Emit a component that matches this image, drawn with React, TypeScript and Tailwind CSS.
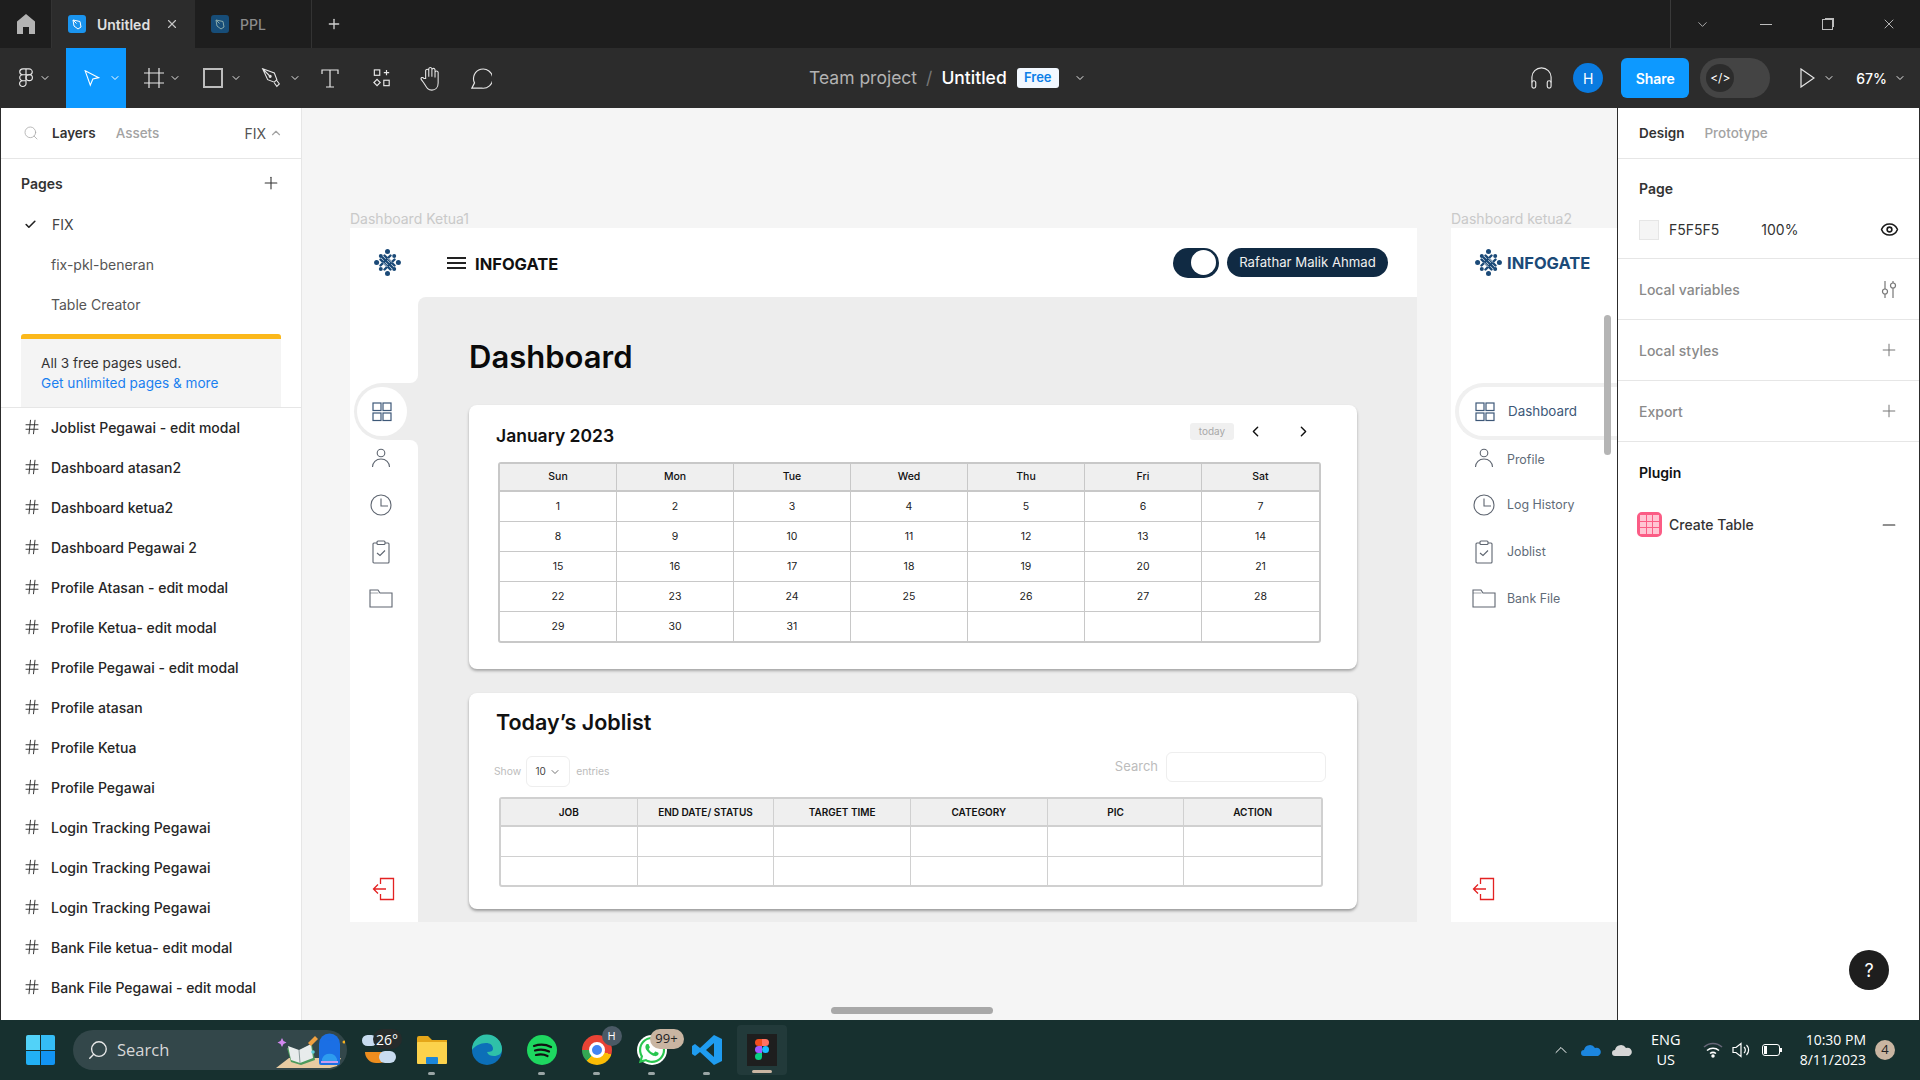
import React from 'react';
import { FaWhatsapp } from 'react-icons/fa';
import { ChevronDown, ChevronUp, ChevronLeft, ChevronRight, Plus, Minus, Search, Check, Eye, Hash, X } from 'lucide-react';

const pages = ['fix-pkl-beneran', 'Table Creator'];
const layers = [
  'Joblist Pegawai - edit modal',
  'Dashboard atasan2',
  'Dashboard ketua2',
  'Dashboard Pegawai 2',
  'Profile Atasan - edit modal',
  'Profile Ketua- edit modal',
  'Profile Pegawai - edit modal',
  'Profile atasan',
  'Profile Ketua',
  'Profile Pegawai',
  'Login Tracking Pegawai',
  'Login Tracking Pegawai',
  'Login Tracking Pegawai',
  'Bank File ketua- edit modal',
  'Bank File Pegawai - edit modal',
];
const days = ['Sun', 'Mon', 'Tue', 'Wed', 'Thu', 'Fri', 'Sat'];
const dates = [
  ['1', '2', '3', '4', '5', '6', '7'],
  ['8', '9', '10', '11', '12', '13', '14'],
  ['15', '16', '17', '18', '19', '20', '21'],
  ['22', '23', '24', '25', '26', '27', '28'],
  ['29', '30', '31', '', '', '', ''],
];
const columns = ['JOB', 'END DATE/ STATUS', 'TARGET TIME', 'CATEGORY', 'PIC', 'ACTION'];

const Chev = ({ className = 'text-[#e6e6e6]' }: { className?: string }) => (
  <ChevronDown size={12} strokeWidth={2} className={className} />
);

const Logo = () => (
  <svg width="27" height="27" viewBox="0 0 27 27" className="shrink-0">
    <g stroke="#1b4a78" strokeWidth="2.400" strokeLinecap="round">
      <path d="M6.500 10.500l10 10M10.500 6.500l10 10M8.500 8.500l10 10" />
      <path d="M6.500 16.500l10-10M10.500 20.500l10-10" />
    </g>
    <path d="M9 13.500l4.500 4.500M13.500 9l4.500 4.500" stroke="#fff" strokeWidth="0.800" />
    <g fill="#1b4a78">
      <circle cx="13.500" cy="2.600" r="2.500" />
      <circle cx="13.500" cy="24.400" r="2.500" />
      <circle cx="2.600" cy="13.500" r="2.500" />
      <circle cx="24.400" cy="13.500" r="2.500" />
      <circle cx="6.800" cy="7" r="2" />
      <circle cx="20.200" cy="7" r="2" />
      <circle cx="6.800" cy="20" r="2" />
      <circle cx="20.200" cy="20" r="2" />
    </g>
  </svg>
);

const GridIcon = () => (
  <svg width="20" height="20" viewBox="0 0 20 20" fill="none" stroke="#3d5878" strokeWidth="1.200">
    <rect x="1" y="1" width="8" height="7.500" />
    <rect x="11" y="1" width="8" height="7.500" />
    <rect x="1" y="11" width="8" height="7.500" />
    <rect x="11" y="11" width="8" height="7.500" />
  </svg>
);
const PersonIcon = () => (
  <svg width="20" height="20" viewBox="0 0 20 20" fill="none" stroke="#5e6570" strokeWidth="1.100">
    <circle cx="10" cy="5" r="3.800" />
    <path d="M1.500 19c0-4.500 3.500-8 8.500-8s8.500 3.500 8.500 8" />
  </svg>
);
const ClockIcon = () => (
  <svg width="22" height="22" viewBox="0 0 22 22" fill="none" stroke="#5e6570" strokeWidth="1.100">
    <circle cx="11" cy="11" r="10" />
    <path d="M11 4.500v7.500h7" />
  </svg>
);
const ClipIcon = () => (
  <svg width="18" height="24" viewBox="0 0 18 24" fill="none" stroke="#5e6570" strokeWidth="1.100">
    <rect x="1" y="3" width="16" height="20" rx="1" />
    <rect x="5" y="1" width="8" height="3.500" rx="1" fill="#fff" />
    <path d="M5 13l3 2.500 5-5" />
  </svg>
);
const FolderIcon = () => (
  <svg width="24" height="19" viewBox="0 0 24 19" fill="none" stroke="#5e6570" strokeWidth="1.100">
    <path d="M1 18V1h8l2 3h12v14z" />
    <path d="M9.500 4H1" strokeWidth="0.600" />
  </svg>
);
const LogoutIcon = () => (
  <svg width="24" height="24" viewBox="0 0 24 24" fill="none" stroke="#e32222" strokeWidth="1.300">
    <path d="M8.500 7V1.500h13v21h-13V17" />
    <path d="M14 12H1.500M6 7.500L1.500 12 6 16.500" />
  </svg>
);

function Tool({ className, active, chevron, children }: { className: string; active?: boolean; chevron?: boolean; children: React.ReactNode }) {
  return (
    <div className={`flex h-full items-center justify-center ${className} ${active ? 'bg-[#0d99ff]' : ''}`}>
      {children}
      {chevron && <Chev className={active ? 'text-white' : 'text-[#e6e6e6]'} />}
    </div>
  );
}

function FileBadge({ dim }: { dim?: boolean }) {
  return (
    <div className={`flex h-[18px] w-[18px] items-center justify-center rounded-[3px] ${dim ? 'bg-[#174d78]' : 'bg-[#1a94ee]'}`}>
      <svg width="12" height="12" viewBox="0 0 12 12" fill="none" stroke={dim ? '#8aa' : '#fff'} strokeWidth="1">
        <path d="M2 2l7 1.500L10 9l-3 2-4-3zM2 2l3.500 3.500" />
      </svg>
    </div>
  );
}

function TabBar() {
  return (
    <div className="flex h-12 items-stretch bg-[#1e1e1e] text-[14px] font-semibold">
      <div className="flex w-[52px] items-center justify-center border-r border-[#333]">
        <svg width="18" height="20" viewBox="0 0 18 20" fill="#b3b3b3">
          <path d="M9 0L0 7.500V20h6v-7h6v7h6V7.500z" />
        </svg>
      </div>
      <div className="flex w-[143px] items-center bg-[#2c2c2c] pl-[16px] text-[#e0e0e0]">
        <FileBadge />
        <span className="ml-[11px]">Untitled</span>
        <X size={14} strokeWidth={2} className="ml-[15px] text-[#c4c4c4]" />
      </div>
      <div className="flex w-[117px] items-center border-r border-[#333] pl-[16px] font-medium text-[#8c8c8c]">
        <FileBadge dim />
        <span className="ml-[11px]">PPL</span>
      </div>
      <div className="flex w-[44px] items-center justify-center text-[#d0d0d0]">
        <Plus size={16} strokeWidth={2} />
      </div>
      <div className="ml-auto flex w-[250px] items-center border-l border-[#3a3a3a] text-[#bdbdbd]">
        <div className="flex w-[64px] justify-center">
          <ChevronDown size={15} strokeWidth={1.400} />
        </div>
        <div className="flex w-[62px] justify-center">
          <div className="h-px w-[12px] bg-[#bdbdbd]" />
        </div>
        <div className="flex w-[62px] justify-center">
          <div className="h-[11px] w-[11px] border border-[#bdbdbd] shadow-[2px_-2px_0_-1px_#bdbdbd]" />
        </div>
        <div className="flex w-[62px] justify-center">
          <X size={16} strokeWidth={1.400} />
        </div>
      </div>
    </div>
  );
}

function ToolBar() {
  return (
    <div className="flex h-[60px] items-center bg-[#2c2c2c] text-white">
      <div className="flex h-full items-center">
        <Tool className="w-[66px] gap-[6px] pl-[4px]" chevron>
          <svg width="14" height="20" viewBox="0 0 14 22" fill="none" stroke="#e6e6e6" strokeWidth="1.200" preserveAspectRatio="none">
            <path d="M7 1H4a3.200 3.200 0 000 6.500h3zM7 1h3a3.200 3.200 0 010 6.500H7zM7 7.500H4a3.200 3.200 0 000 6.500h3zM7 14H4a3.200 3.200 0 103 3.200z" />
            <circle cx="10.200" cy="10.700" r="3.200" />
          </svg>
        </Tool>
        <Tool className="w-[60px] gap-[9px] pl-[13px]" active chevron>
          <svg width="16" height="17" viewBox="0 0 18 20" fill="none" stroke="#fff" strokeWidth="1.300">
            <path d="M1 1l16 8-7 1.500L7 18z" />
          </svg>
        </Tool>
        <Tool className="w-[66px] gap-[5px] pl-[7px]" chevron>
          <svg width="20" height="20" viewBox="0 0 20 20" fill="none" stroke="#e6e6e6" strokeWidth="1.200">
            <path d="M5 0v20M15 0v20M0 5h20M0 15h20" />
          </svg>
        </Tool>
        <Tool className="w-[60px] gap-[7px]" chevron>
          <div className="h-[20px] w-[20px] border-2 border-[#bdbdbd]" />
        </Tool>
        <Tool className="w-[58px] gap-[8px]" chevron>
          <svg width="20" height="20" viewBox="0 0 22 24" fill="none" stroke="#e6e6e6" strokeWidth="1.300">
            <path d="M1 1l14 5 3 8-3 3-8-3zM1 1l8 8M15 18l3 4 3-3-3-4" />
            <circle cx="10" cy="10" r="1.200" fill="#e6e6e6" />
          </svg>
        </Tool>
        <Tool className="w-[40px]">
          <svg width="18" height="19" viewBox="0 0 18 19" fill="none" stroke="#e6e6e6" strokeWidth="1.200">
            <path d="M1 5V1h16v4M9 1v17M5 18h8" />
          </svg>
        </Tool>
        <Tool className="w-[64px]">
          <svg width="18" height="18" viewBox="0 0 20 20" fill="none" stroke="#e6e6e6" strokeWidth="1.300">
            <rect x="1.500" y="1" width="6" height="6" />
            <rect x="12" y="12.500" width="6" height="6" />
            <path d="M15 1v6M12 4h6M4.500 11.500l3.500 3.500-3.500 3.500L1 15z" />
          </svg>
        </Tool>
        <Tool className="w-[34px]">
          <svg width="22" height="25" viewBox="0 0 24 28" fill="none" stroke="#e6e6e6" strokeWidth="1.200">
            <path d="M6 14V5a1.800 1.800 0 013.500 0v7V3a1.800 1.800 0 013.500 0v9V4a1.800 1.800 0 013.500 0v9V7a1.800 1.800 0 013.500 0v12c0 5-3 8-7 8-5 0-6-3-9-8l-3-4c-1-2 2-3 3-1z" />
          </svg>
        </Tool>
        <Tool className="w-[66px]">
          <svg width="21" height="21" viewBox="0 0 24 24" fill="none" stroke="#e6e6e6" strokeWidth="1.300">
            <path d="M1 23l3-6A11 11 0 1112 23z" />
          </svg>
        </Tool>
      </div>

      <div className="ml-[295px] flex items-center text-[17.500px]">
        <span className="text-[#b3b3b3]">Team project</span>
        <span className="mx-[9px] text-[#777]">/</span>
        <span className="font-medium text-white">Untitled</span>
        <span className="ml-[10px] flex h-[20px] w-[42px] items-center justify-center rounded-[3px] bg-[#f2f8ff] text-[13px] font-semibold text-[#0d7fe8]">Free</span>
        <Chev className="ml-[15px] text-[#e6e6e6]" />
      </div>

      <div className="ml-auto flex items-center">
        <svg width="23" height="22" viewBox="0 0 24 24" fill="none" stroke="#e6e6e6" strokeWidth="1.200" className="mr-[20px]" preserveAspectRatio="none">
          <path d="M2 17V11a10 10 0 0120 0v6" />
          <rect x="2" y="15" width="4" height="8" rx="2" />
          <rect x="18" y="15" width="4" height="8" rx="2" />
        </svg>
        <div className="flex h-[30px] w-[30px] items-center justify-center rounded-full bg-[#0a7be0] text-[14px]">H</div>
        <div className="ml-[18px] flex h-[40px] w-[68px] items-center justify-center rounded-[6px] bg-[#0d99ff] text-[14px] font-semibold">Share</div>
        <div className="ml-[11px] flex h-[40px] w-[70px] items-center rounded-full bg-[#444] pl-[6px]">
          <div className="flex h-[28px] w-[28px] items-center justify-center rounded-full bg-[#2c2c2c] text-[12px]">&lt;/&gt;</div>
        </div>
        <svg width="16" height="20" viewBox="0 0 16 20" fill="none" stroke="#e6e6e6" strokeWidth="1.200" className="ml-[29px]">
          <path d="M2 1l13 9-13 9z" />
        </svg>
        <Chev className="ml-[8px] text-[#e6e6e6]" />
        <span className="ml-[21px] text-[14px] font-medium">67%</span>
        <Chev className="ml-[7px] mr-[14px] text-[#e6e6e6]" />
      </div>
    </div>
  );
}

function LeftPanel() {
  return (
    <aside className="flex w-[302px] shrink-0 flex-col overflow-hidden border-x border-l-[#2c2c2c] border-r-[#e6e6e6] bg-white text-[14px] text-[#333]">
      <div className="flex h-[51px] shrink-0 items-center border-b border-[#e6e6e6] pl-[22px] pr-[18px] text-[13.500px]">
        <Search size={16} strokeWidth={1.200} className="text-[#a8a8a8]" />
        <span className="ml-[13px] font-semibold">Layers</span>
        <span className="ml-[20px] font-medium text-[#a3a3a3]">Assets</span>
        <span className="ml-auto text-[14px] text-[#555]">FIX</span>
        <ChevronUp size={14} className="ml-[3px] text-[#a3a3a3]" />
      </div>
      <div className="flex h-[45px] shrink-0 items-center justify-between pl-[20px] pr-[20px] pt-[3px]">
        <span className="font-semibold">Pages</span>
        <Plus size={20} strokeWidth={1.300} />
      </div>
      <div className="flex h-[40px] shrink-0 items-center pl-[23px] text-[#444]">
        <Check size={13} strokeWidth={3} className="text-[#222]" />
        <span className="ml-[15px]">FIX</span>
      </div>
      {pages.map((name) => (
        <div key={name} className="flex h-[40px] shrink-0 items-center pl-[50px] text-[#555]">
          {name}
        </div>
      ))}
      <div className="mx-[20px] mt-[10px] h-[73px] shrink-0 rounded-t-[3px] border-t-[5px] border-[#fbb81b] bg-[#f4f4f4] pl-[20px] pt-[14px] text-[13.600px] leading-[20px]">
        <div>All 3 free pages used.</div>
        <div className="text-[#1a80f0]">Get unlimited pages &amp; more</div>
      </div>
      <div className="shrink-0 border-t border-[#e6e6e6]">
        {layers.map((name, i) => (
          <div key={i} className="flex h-[40px] items-center pb-[2px] pl-[22px] font-medium text-[#262626]">
            <Hash size={18} strokeWidth={1.300} className="text-[#333]" />
            <span className="ml-[10px]">{name}</span>
          </div>
        ))}
      </div>
    </aside>
  );
}

function MonthTable() {
  return (
    <div className="ml-[29px] mr-[36px] mt-[13px] overflow-hidden rounded-[3px] border-2 border-[#c8c8c8]">
      <div className="grid grid-cols-7 bg-[#efefef] text-[10.500px] font-medium text-[#111]">
        {days.map((day) => (
          <div key={day} className="flex h-[28px] items-center justify-center border-b-2 border-r border-[#c8c8c8] last:border-r-0">
            {day}
          </div>
        ))}
      </div>
      {dates.map((week, w) => (
        <div key={w} className="grid grid-cols-7 text-[10.500px] text-[#222]">
          {week.map((d, i) => (
            <div
              key={i}
              className={`flex items-center justify-center border-r border-[#c8c8c8] last:border-r-0 ${w === 4 ? 'h-[29px]' : 'h-[30px] border-b'}`}
            >
              {d}
            </div>
          ))}
        </div>
      ))}
    </div>
  );
}

function JobTable() {
  return (
    <div className="ml-[30px] mr-[34px] mt-[10px] overflow-hidden rounded-[3px] border-2 border-[#d0d0d0]">
      <div className="grid grid-cols-6 bg-[#efefef] text-[10px] font-semibold text-[#111]">
        {columns.map((c) => (
          <div key={c} className="flex h-[28px] items-center justify-center border-b-2 border-r border-[#d0d0d0] last:border-r-0">
            {c}
          </div>
        ))}
      </div>
      {[0, 1].map((r) => (
        <div key={r} className="grid grid-cols-6">
          {columns.map((c) => (
            <div key={c} className={`border-r border-[#d0d0d0] last:border-r-0 ${r === 0 ? 'h-[30px] border-b' : 'h-[28px]'}`} />
          ))}
        </div>
      ))}
    </div>
  );
}

function DashboardFrame() {
  return (
    <div className="absolute left-[48px] top-[120px] flex h-[694px] w-[1067px] flex-col bg-white">
      <span className="absolute -top-[20px] left-0 text-[14px] text-[#c9c9c9]">Dashboard Ketua1</span>
      <div className="flex h-[69px] shrink-0 items-center pl-[24px]">
        <Logo />
        <div className="ml-[46px] flex w-[19px] flex-col gap-[3px]">
          <div className="h-[2px] bg-[#222]" />
          <div className="h-[2px] bg-[#222]" />
          <div className="h-[2px] bg-[#222]" />
        </div>
        <span className="ml-[9px] pt-[3px] text-[16.500px] font-bold text-[#111]">INFOGATE</span>
        <div className="ml-auto flex h-[30px] w-[46px] items-center justify-end rounded-full bg-[#102a43] pr-[3px]">
          <div className="h-[25px] w-[25px] rounded-full bg-white" />
        </div>
        <div className="ml-[8px] mr-[29px] flex h-[29px] w-[161px] items-center justify-center rounded-full bg-[#102a43] pt-[1px] text-[13.200px] text-[#f0f0f0]">
          Rafathar Malik Ahmad
        </div>
      </div>
      <div className="flex min-h-0 flex-1">
        <div className="flex w-[68px] shrink-0 flex-col bg-[#ededed]">
          <div className="h-[86px] rounded-br-lg bg-white" />
          <div className="bg-white">
            <div className="ml-[4px] h-[57px] rounded-l-full bg-[#ededed] py-[4px] pl-[3px]">
              <div className="flex h-[49px] w-[50px] items-center justify-center rounded-full bg-white">
                <GridIcon />
              </div>
            </div>
          </div>
          <div className="flex flex-1 flex-col items-center rounded-tr-lg bg-white pb-[21px] pr-[6px] pt-[8px]">
            <div className="flex h-[20px] items-center"><PersonIcon /></div>
            <div className="mt-[26px] flex h-[22px] items-center"><ClockIcon /></div>
            <div className="mt-[24px] flex h-[24px] items-center"><ClipIcon /></div>
            <div className="mt-[25px] flex h-[19px] items-center"><FolderIcon /></div>
            <div className="mt-auto ml-[6px]"><LogoutIcon /></div>
          </div>
        </div>
        <div className="flex-1 rounded-tl-lg bg-[#ededed] pl-[51px] pr-[60px]">
          <h1 className="mt-[38px] h-[44px] text-[31px] font-semibold leading-[44px] text-[#0a0a0a]">Dashboard</h1>
          <section className="mt-[26px] h-[264px] rounded-lg bg-white shadow-[0_2px_3px_rgba(0,0,0,0.3)]">
            <div className="flex items-start justify-between pl-[27px] pr-[45px] pt-[18px]">
              <span className="text-[17.500px] font-semibold text-[#111]">January 2023</span>
              <div className="flex items-center">
                <span className="flex h-[17px] w-[44px] items-center justify-center rounded-[3px] bg-[#f0f0f0] text-[10px] text-[#a8a8a8]">today</span>
                <ChevronLeft size={17} strokeWidth={2} className="ml-[13px] text-[#111]" />
                <ChevronRight size={17} strokeWidth={2} className="ml-[31px] text-[#111]" />
              </div>
            </div>
            <MonthTable />
          </section>
          <section className="mt-[24px] h-[216px] rounded-lg bg-white shadow-[0_2px_3px_rgba(0,0,0,0.35)]">
            <div className="pl-[27px] pt-[13px] text-[21.500px] font-semibold leading-[32px] text-[#111]">Today’s Joblist</div>
            <div className="flex items-start justify-between pl-[25px] pr-[31px] pt-[14px]">
              <div className="mt-[4px] flex items-center text-[10.300px] text-[#bcbcbc]">
                <span>Show</span>
                <span className="ml-[5px] flex h-[31px] w-[44px] items-center justify-center gap-[3px] rounded-[6px] border border-[#eee] text-[10px] text-[#444]">
                  10 <ChevronDown size={12} strokeWidth={1.500} />
                </span>
                <span className="ml-[6px]">entries</span>
              </div>
              <div className="flex items-center text-[13px] text-[#bcbcbc]">
                <span>Search</span>
                <div className="ml-[8px] h-[30px] w-[160px] rounded-[6px] border border-[#eee]" />
              </div>
            </div>
            <JobTable />
          </section>
        </div>
      </div>
    </div>
  );
}

function NavRow({ icon, label, className, labelClass = '' }: { icon: React.ReactNode; label: string; className: string; labelClass?: string }) {
  return (
    <div className={`flex items-center ${className}`}>
      <div className="flex w-[24px] justify-center">{icon}</div>
      <span className={`ml-[11px] text-[12.400px] text-[#5f6b78] ${labelClass}`}>{label}</span>
    </div>
  );
}

function NavFrame() {
  return (
    <div className="absolute left-[1149px] top-[120px] flex h-[694px] w-[167px] flex-col bg-white">
      <span className="absolute -top-[20px] left-0 whitespace-nowrap text-[14px] text-[#c9c9c9]">Dashboard ketua2</span>
      <div className="flex h-[69px] shrink-0 items-center pl-[24px]">
        <Logo />
        <span className="ml-[5px] pt-[1px] text-[16.500px] font-bold text-[#1b4a78]">INFOGATE</span>
      </div>
      <div className="mt-[86px] ml-[4px] flex h-[57px] shrink-0 items-center rounded-l-full border-y-4 border-l-4 border-[#f0f0f0] pl-[16px]">
        <GridIcon />
        <span className="ml-[13px] text-[13.400px] text-[#3d5878]">Dashboard</span>
      </div>
      <div className="flex flex-1 flex-col pb-[21px] pl-[21px] pt-[8px]">
        <NavRow icon={<PersonIcon />} label="Profile" className="h-[20px]" labelClass="pt-[4px]" />
        <NavRow icon={<ClockIcon />} label="Log History" className="mt-[26px] h-[22px]" />
        <NavRow icon={<ClipIcon />} label="Joblist" className="mt-[24px] h-[24px]" />
        <NavRow icon={<FolderIcon />} label="Bank File" className="mt-[25px] h-[19px]" labelClass="pt-[2px]" />
        <div className="mt-auto"><LogoutIcon /></div>
      </div>
      <div className="absolute left-[153px] top-[87px] h-[140px] w-[7px] rounded-full bg-[#b5b5b5]" />
    </div>
  );
}

function Canvas() {
  return (
    <main className="relative min-w-0 flex-1 overflow-hidden bg-[#f5f5f5]">
      <DashboardFrame />
      <NavFrame />
      <div className="absolute left-[529px] top-[899px] h-[7px] w-[162px] rounded-full bg-[#a8a8a8]" />
    </main>
  );
}

function SideRow({ label, icon }: { label: string; icon: React.ReactNode }) {
  return (
    <div className="flex h-[61px] items-center justify-between border-b border-[#e6e6e6] pl-[21px] pr-[20px] font-medium text-[#8a8a8a]">
      <span>{label}</span>
      {icon}
    </div>
  );
}

function RightPanel() {
  return (
    <aside className="relative flex w-[303px] shrink-0 flex-col border-x border-l-[#2c2c2c] border-r-[#2c2c2c] bg-white text-[14px] text-[#333]">
      <div className="flex h-[51px] shrink-0 items-center border-b border-[#e6e6e6] pl-[21px] text-[13.500px]">
        <span className="font-semibold">Design</span>
        <span className="ml-[20px] font-medium text-[#a3a3a3]">Prototype</span>
      </div>
      <div className="flex h-[58px] items-center pl-[21px] font-semibold">Page</div>
      <div className="flex h-[42px] items-start justify-between border-b border-[#e6e6e6] pl-[21px] pr-[20px] pt-[2px]">
        <div className="flex items-center">
          <div className="h-[20px] w-[20px] border border-[#e6e6e6] bg-[#f5f5f5]" />
          <span className="ml-[10px] text-[#333]">F5F5F5</span>
          <span className="ml-[42px]">100%</span>
        </div>
        <Eye size={19} strokeWidth={2} className="mt-[1px] text-[#1a1a1a]" />
      </div>
      <SideRow
        label="Local variables"
        icon={
          <svg width="16" height="18" viewBox="0 0 16 18" fill="none" stroke="#777" strokeWidth="1.200" className="mr-[2px]">
            <path d="M4 1v8M4 14v4M12 1v2M12 8v10" />
            <circle cx="4" cy="11.500" r="2.500" />
            <circle cx="12" cy="5.500" r="2.500" />
          </svg>
        }
      />
      <SideRow label="Local styles" icon={<Plus size={20} strokeWidth={1.200} className="text-[#777]" />} />
      <SideRow label="Export" icon={<Plus size={20} strokeWidth={1.200} className="text-[#777]" />} />
      <div className="flex h-[61px] items-center pl-[21px] font-semibold text-[#111]">Plugin</div>
      <div className="flex h-[41px] items-center justify-between pl-[19px] pr-[20px] pt-[2px]">
        <div className="flex items-center">
          <div className="grid h-[25px] w-[25px] grid-cols-3 grid-rows-3 gap-px rounded-[5px] border-[3px] border-[#fb5c85] bg-[#fb5c85]">
            {[0, 1, 2, 3, 4, 5, 6, 7, 8].map((n) => (
              <div key={n} className="bg-[#ffc5d3]" />
            ))}
          </div>
          <span className="ml-[7px] font-medium">Create Table</span>
        </div>
        <Minus size={20} strokeWidth={1.300} className="text-[#222]" />
      </div>
      <div className="absolute bottom-[30px] right-[30px] flex h-[40px] w-[40px] items-center justify-center rounded-full bg-[#1e1e1e] text-[18px] text-white">?</div>
    </aside>
  );
}

function TaskIcon({ dot, children }: { dot?: boolean; children: React.ReactNode }) {
  return (
    <div className="relative flex h-[60px] w-[55px] items-center justify-center">
      {children}
      {dot && <div className="absolute bottom-[5px] h-[3px] w-[7px] rounded-full bg-[#9aa5a5]" />}
    </div>
  );
}

function TaskBar() {
  return (
    <footer className="flex h-[60px] shrink-0 items-center bg-[#17302f] font-['Open_Sans',sans-serif] text-white">
      <div className="ml-[26px] grid h-[30px] w-[29px] grid-cols-2 gap-[1px]">
        <div className="rounded-tl-[2px] bg-[#52d2f8]" />
        <div className="rounded-tr-[2px] bg-[#35bdf6]" />
        <div className="rounded-bl-[2px] bg-[#22b0f5]" />
        <div className="rounded-br-[2px] bg-[#1294f3]" />
      </div>
      <div className="ml-[18px] flex h-[40px] w-[274px] items-center rounded-full bg-[#33474a] pl-[14px] pr-[2px]">
        <Search size={22} strokeWidth={1.500} className="-scale-x-100 text-[#e8e8e8]" />
        <span className="ml-[8px] text-[16.500px] text-[#d8d8d8]">Search</span>
        <svg width="70" height="40" viewBox="0 0 70 40" className="ml-auto">
          <path d="M1 38l13-10h52l-4 8-7 2z" fill="#e8cba2" />
          <path d="M12 18l12 3 13-6 3 15-14 5-10-3z" fill="#4c9a5c" />
          <path d="M13 16l11 4 12-6 2 14-13 5-9-3z" fill="#e8ecec" />
          <path d="M24 20l1 13" stroke="#8a9a9a" />
          <path d="M33 13l7-7 3 3-7 7z" fill="#f0a040" />
          <path d="M44 14a10 10 0 0121 0v19a2 2 0 01-2 2H46a2 2 0 01-2-2z" fill="#1b6fe4" />
          <rect x="50" y="6" width="9" height="4" rx="2" fill="none" stroke="#1b6fe4" strokeWidth="1.500" />
          <path d="M47 29a8 8 0 0115 0v3H47z" fill="#2d9cef" />
          <rect x="46" y="31" width="17" height="2" fill="#c79cf0" />
          <path d="M7 8l1.500 3 3 1.500-3 1.500L7 17l-1.500-3-3-1.500 3-1.500z" fill="#d388f0" />
          <circle cx="38" cy="22" r="1.800" fill="#5fd0d8" />
          <circle cx="69" cy="12" r="1.500" fill="#f5b01e" />
        </svg>
      </div>
      <div className="ml-[2px] flex items-center">
        <TaskIcon>
          <div className="relative ml-[6px] h-[40px] w-[36px]">
            <div className="absolute left-[3px] top-[22px] h-[11px] w-[25px] rounded-b-full bg-[#ee8d1e]" />
            <div className="absolute left-[17px] top-[21px] h-[12px] w-[17px] rounded-full bg-[#c8dcf0]" />
            <div className="absolute left-0 top-[5px] h-[11px] w-[15px] rounded-full bg-[#c8dcf0]" />
            <span className="absolute -top-[1px] left-[11px] flex h-[20px] w-[29px] items-center justify-center rounded-full bg-[#262b2b] text-[14px]">26°</span>
          </div>
        </TaskIcon>
        <TaskIcon dot>
          <svg width="32" height="30" viewBox="0 0 32 30">
            <path d="M1 3a2 2 0 012-2h9l4 4h15v23H1z" fill="#e5a619" />
            <rect x="1" y="7" width="30" height="22" rx="1" fill="#fcd24c" />
            <rect x="10" y="22" width="12" height="7" rx="1" fill="#1c86d9" />
          </svg>
        </TaskIcon>
        <TaskIcon>
          <svg width="32" height="32" viewBox="0 0 32 32">
            <circle cx="16" cy="16" r="15" fill="#0c6fb8" />
            <path d="M1 16A15 15 0 0131 15c0 5-4 7-8 7-3 0-6-1-7-4 4 0 6-1 6-3 0-4-3-6-7-6-6 0-11 3-14 7z" fill="#2fc1a8" />
          </svg>
        </TaskIcon>
        <TaskIcon dot>
          <svg width="30" height="30" viewBox="0 0 30 30" fill="none">
            <circle cx="15" cy="15" r="15" fill="#1ed760" />
            <path d="M7 11c6-2 12-1.500 17 1M8 15.500c5-1.500 10-1 14 1M9 20c4-1 8-.8 11.500 1" stroke="#111" strokeWidth="2.200" strokeLinecap="round" />
          </svg>
        </TaskIcon>
        <TaskIcon dot>
          <div className="relative h-[30px] w-[30px] rounded-full bg-[conic-gradient(#e94335_0_30%,#fbbc05_30%_62%,#34a853_62%_75%,#e94335_75%_100%)]">
            <div className="absolute left-[7px] top-[7px] h-[16px] w-[16px] rounded-full border-[3px] border-white bg-[#4285f4]" />
            <span className="absolute -right-[10px] -top-[9px] flex h-[20px] w-[20px] items-center justify-center rounded-full bg-[#4b5a66] text-[11px]">H</span>
          </div>
        </TaskIcon>
        <TaskIcon dot>
          <div className="relative flex h-[30px] w-[30px] items-center justify-center rounded-full bg-white">
            <FaWhatsapp size={30} className="text-[#29c64f]" />
            <span className="absolute -right-[17px] -top-[6px] flex h-[20px] w-[34px] items-center justify-center rounded-full bg-[#c9b5a2] text-[13px] text-[#222]">99+</span>
          </div>
        </TaskIcon>
        <TaskIcon dot>
          <svg width="30" height="30" viewBox="0 0 30 30">
            <path d="M22 0l8 4v22l-8 4L8 17l-5 4-3-2v-8l3-2 5 4zM22 8l-8 7 8 7z" fill="#1f9cf0" />
          </svg>
        </TaskIcon>
        <div className="relative ml-[3px] flex h-[50px] w-[50px] items-center justify-center rounded-[4px] bg-[#223a3a]">
          <div className="flex h-[32px] w-[30px] items-center justify-center bg-[#1e1e1e]">
            <svg width="14" height="22" viewBox="0 0 14 22">
              <path d="M7 0H3.500a3.500 3.500 0 000 7H7z" fill="#f24e1e" />
              <path d="M7 0h3.500a3.500 3.500 0 010 7H7z" fill="#ff7262" />
              <path d="M7 7H3.500a3.500 3.500 0 000 7H7z" fill="#a259ff" />
              <circle cx="10.500" cy="10.500" r="3.500" fill="#1abcfe" />
              <path d="M7 14H3.500A3.500 3.500 0 107 17.500z" fill="#0acf83" />
            </svg>
          </div>
          <div className="absolute bottom-[2px] h-[3px] w-[20px] rounded-full bg-[#c9b5a2]" />
        </div>
      </div>
      <div className="ml-auto flex items-center">
        <ChevronUp size={20} strokeWidth={1.200} className="text-white" />
        <svg width="20" height="12" viewBox="0 0 20 12" className="ml-[10px]">
          <path d="M3 12a3 3 0 010-6 6 6 0 0111-2 4 4 0 013 8z" fill="#1c86df" />
        </svg>
        <svg width="20" height="12" viewBox="0 0 20 12" className="ml-[11px]">
          <path d="M3 12a3 3 0 010-6 6 6 0 0111-2 4 4 0 013 8z" fill="#d6d6d6" />
        </svg>
        <div className="ml-[12px] w-[44px] text-center text-[14.500px] leading-[20px]">
          <div>ENG</div>
          <div>US</div>
        </div>
        <svg width="20" height="16" viewBox="0 0 20 16" fill="none" stroke="#fff" strokeWidth="1.500" className="ml-[15px]">
          <path d="M1 5a13 13 0 0118 0" stroke="#667" />
          <path d="M4 8.500a9 9 0 0112 0M7 11.500a5 5 0 016 0" />
          <circle cx="10" cy="14" r="1" fill="#fff" />
        </svg>
        <svg width="20" height="16" viewBox="0 0 20 16" fill="none" stroke="#fff" strokeWidth="1.200" className="ml-[9px]">
          <path d="M1 5.500h3L9 1.500v13l-5-4H1z" />
          <path d="M12 5a4 4 0 010 6M14.500 3a7 7 0 010 10" />
        </svg>
        <div className="ml-[10px] flex items-center">
          <div className="flex h-[12px] w-[18px] items-center rounded-[3px] border border-white pl-px">
            <div className="h-[8px] w-[3px] bg-white" />
          </div>
          <div className="h-[4px] w-[2px] bg-white" />
        </div>
        <div className="ml-[18px] text-right text-[14px] leading-[20px]">
          <div>10:30 PM</div>
          <div>8/11/2023</div>
        </div>
        <div className="ml-[9px] mr-[25px] flex h-[20px] w-[20px] items-center justify-center rounded-full bg-[#c9b5a2] text-[13px] text-[#222]">4</div>
      </div>
    </footer>
  );
}

export default function App() {
  return (
    <div className="flex h-[1080px] w-[1920px] flex-col overflow-hidden font-['Inter',sans-serif]">
      <TabBar />
      <ToolBar />
      <div className="flex min-h-0 flex-1">
        <LeftPanel />
        <Canvas />
        <RightPanel />
      </div>
      <TaskBar />
    </div>
  );
}
